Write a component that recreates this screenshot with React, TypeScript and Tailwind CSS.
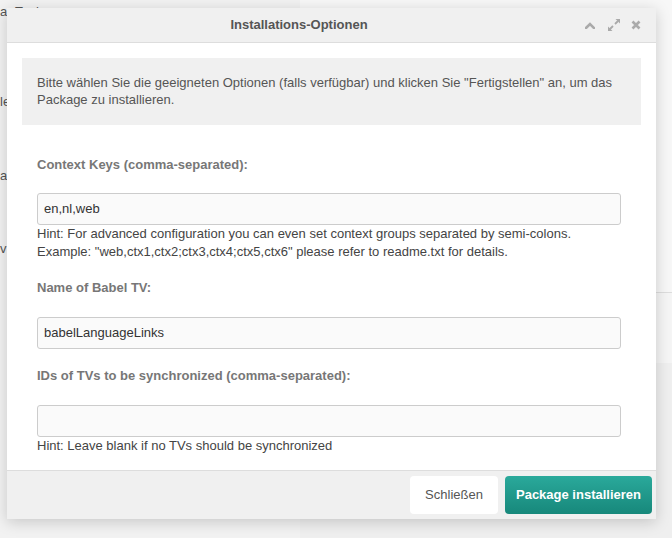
import { type ReactNode } from 'react';

const font = "font-['Liberation_Sans',Arial,sans-serif]";

function ChevronUp() {
  return (
    <svg width="10" height="7" viewBox="0 0 10 7" className="block">
      <path d="M1 6 L5 2 L9 6" fill="none" stroke="#aaaaaa" strokeWidth="2.6" strokeLinecap="square" />
    </svg>
  );
}

function Expand() {
  return (
    <svg width="14" height="14" viewBox="0 0 14 14" className="block">
      <path d="M8 6 L11 3 M2.5 11.5 L6 8" stroke="#aaaaaa" strokeWidth="1.8" />
      <path d="M8.5 1 H13 V5.5 Z M1 8.5 V13 H5.5 Z" fill="#aaaaaa" />
    </svg>
  );
}

function Times() {
  return (
    <svg width="10" height="10" viewBox="0 0 10 10" className="block">
      <path d="M1.5 1.5 L8.5 8.5 M8.5 1.5 L1.5 8.5" stroke="#aaaaaa" strokeWidth="2.6" />
    </svg>
  );
}

function Field({ label, value, hint, first }: { label: string; value: string; hint?: ReactNode; first?: boolean }) {
  return (
    <div className={first ? 'mt-[31px]' : 'mt-[18px]'}>
      <div className={`text-[13px] leading-[18px] font-bold text-[#777777] ${first ? 'mb-[19px]' : 'mb-[20px]'}`}>{label}</div>
      <div className="h-[32px] border border-[#cccccc] rounded-[3px] bg-[#fafafa] px-[6px] flex items-center text-[13px] text-[#333333]">
        {value}
      </div>
      {hint && <div className="text-[13px] leading-[18px] text-[#444444]">{hint}</div>}
    </div>
  );
}

export default function App() {
  return (
    <div className={`${font} relative w-[672px] h-[538px] overflow-hidden bg-[#f2f2f2]`}>
      {/* page behind the dialog */}
      <div className="h-full w-full flex">
        <div className="w-[300px] text-[13px] text-[#555555] pt-[4px]">
          <div className="leading-[16px]">a- Tools</div>
          <div className="mt-[72px]">le</div>
          <div className="mt-[54px]">ar</div>
          <div className="mt-[54px]">v</div>
        </div>
        <div className="flex-1 flex flex-col">
          <div className="h-[293px] border-b border-[#dddddd] bg-[#f7f7f7]" />
          <div className="h-[70px] bg-[#f5f5f5]" />
          <div className="flex-1 bg-[#efefef]" />
        </div>
      </div>

      {/* modal dialog */}
      <div className="absolute left-[7px] top-[8px] w-[649px] bg-white shadow-[0_3px_14px_rgba(0,0,0,0.18)] flex flex-col">
        <div className="h-[35px] bg-[#f0f0f0] border-b border-[#dddddd] flex items-center">
          <div className="flex-1 pl-[6px] text-center text-[13px] font-bold text-[#555555]">Installations-Optionen</div>
          <div className="flex items-center pr-[15px]">
            <ChevronUp />
            <div className="ml-[12px]"><Expand /></div>
            <div className="ml-[10px]"><Times /></div>
          </div>
        </div>

        <div className="pt-[15px] pb-[15px] px-[15px]">
          <div className="bg-[#f0f0f0] px-[15px] pt-[16px] pb-[17px] text-[13px] leading-[17px] text-[#555555]">
            Bitte wählen Sie die geeigneten Optionen (falls verfügbar) und klicken Sie "Fertigstellen" an, um das Package zu installieren.
          </div>

          <div className="pl-[15px] pr-[20px]">
            <Field
              first
              label="Context Keys (comma-separated):"
              value="en,nl,web"
              hint={
                <>
                  Hint: For advanced configuration you can even set context groups separated by semi-colons.
                  <br />
                  Example: "web,ctx1,ctx2;ctx3,ctx4;ctx5,ctx6" please refer to readme.txt for details.
                </>
              }
            />
            <Field label="Name of Babel TV:" value="babelLanguageLinks" />
            <Field
              label="IDs of TVs to be synchronized (comma-separated):"
              value=""
              hint="Hint: Leave blank if no TVs should be synchronized"
            />
          </div>
        </div>

        <div className="h-[49px] bg-[#f0f0f0] border-t border-[#dddddd] flex items-start justify-end gap-[7px] pt-[5px] pr-[4px]">
          <button className="h-[38px] w-[88px] rounded-[4px] bg-white text-[13px] text-[#555555]">Schließen</button>
          <button className="h-[38px] w-[147px] rounded-[4px] bg-gradient-to-b from-[#2aa99b] to-[#17887b] text-[13px] font-bold text-white">
            Package installieren
          </button>
        </div>
      </div>
    </div>
  );
}
